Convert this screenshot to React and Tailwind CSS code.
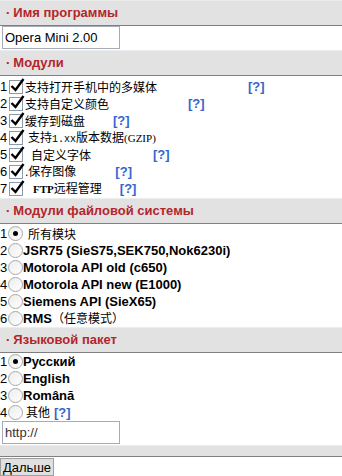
import React from 'react';

const Header = ({ title }) => (
  <div className="h-[26px] bg-[#e2e2e2] border-t border-t-[#ececec] border-b border-b-[#808080] flex items-center pl-[6px] text-[13px] font-bold text-[#b3262b]">
    <span className="mr-[3px]">·</span>
    {title}
  </div>
);

const Help = ({ className = '' }) => (
  <span className={`text-[13px] font-bold text-[#3366cc] ${className}`}>[?]</span>
);

const CheckBox = () => (
  <span className="relative inline-block w-[14px] h-[14px] border border-[#8a9aaa] bg-white mx-[1px]">
    <svg className="absolute -top-[4px] left-0" width="15" height="16" viewBox="0 0 15 16">
      <path d="M1.5 9 L5.5 13 L13.5 2" fill="none" stroke="#000" strokeWidth="2.4" />
    </svg>
  </span>
);

const Radio = ({ checked }) => (
  <span className="inline-flex items-center justify-center w-[15px] h-[15px] rounded-full border border-[#a8a8a8] bg-gradient-to-br from-[#ececec] to-white">
    {checked && <span className="w-[5px] h-[5px] rounded-full bg-black"></span>}
  </span>
);

const Row = ({ n, children }) => (
  <div className="h-[17px] flex items-center text-[13px] text-black whitespace-nowrap">
    <span className="w-[8px]">{n}</span>
    {children}
  </div>
);

const Cjk = ({ className = '', children }) => (
  <span className={`font-['Noto_Sans_CJK_SC',sans-serif] text-[12px] ${className}`}>{children}</span>
);

const modules = [
  { text: <Cjk className="ml-[1px]">支持打开手机中的多媒体</Cjk>, help: 'ml-[91px]' },
  { text: <Cjk className="ml-[1px]">支持自定义颜色</Cjk>, help: 'ml-[79px]' },
  { text: <Cjk className="ml-[1px]">缓存到磁盘</Cjk>, help: 'ml-[28px]' },
  {
    text: (
      <span className="text-[12px] ml-[4px]">
        <Cjk>支持</Cjk>
        <span className="text-[10px] font-['Liberation_Mono',monospace]">1.xx</span>
        <Cjk>版本数据</Cjk>
        <span className="text-[11px] font-['Liberation_Serif',serif]">(GZIP)</span>
      </span>
    ),
    help: null,
  },
  { text: <Cjk className="ml-[7px]">自定义字体</Cjk>, help: 'ml-[62px]' },
  {
    text: (
      <span className="text-[12px] ml-[1px]">
        <span>.</span>
        <Cjk>保存图像</Cjk>
      </span>
    ),
    help: 'ml-[39px]',
  },
  {
    text: (
      <span className="text-[12px] ml-[9px]">
        <span className="font-bold text-[11px] font-['Liberation_Serif',serif]">FTP</span>
        <Cjk>远程管理</Cjk>
      </span>
    ),
    help: 'ml-[18px]',
  },
];

const fsModules = [
  { text: <Cjk className="ml-[5px]">所有模块</Cjk>, checked: true },
  { text: <b>JSR75 (SieS75,SEK750,Nok6230i)</b> },
  { text: <b>Motorola API old (c650)</b> },
  { text: <b>Motorola API new (E1000)</b> },
  { text: <b>Siemens API (SieX65)</b> },
  {
    text: (
      <span>
        <b>RMS</b>
        <Cjk>（任意模式）</Cjk>
      </span>
    ),
  },
];

const langs = [
  { text: <b>Русский</b>, checked: true },
  { text: <b>English</b> },
  { text: <b>Română</b> },
  {
    text: (
      <span>
        <Cjk className="ml-[3px]">其他</Cjk>
        <Help className="ml-[4px]" />
      </span>
    ),
  },
];

export default function App() {
  return (
    <div className="w-[342px] h-[476px] bg-white overflow-hidden font-['Liberation_Sans','Noto_Sans_CJK_SC',sans-serif]">
      <Header title="Имя программы" />
      <div className="h-[24px] flex items-start">
        <input
          className="ml-[2px] w-[118px] h-[23px] border border-[#a5acb5] px-[2px] text-[13px] text-black outline-none"
          defaultValue="Opera Mini 2.00"
        />
      </div>

      <Header title="Модули" />
      <div className="pt-[2px] pb-[1px]">
        {modules.map((m, i) => (
          <Row key={i} n={i + 1}>
            <CheckBox />
            {m.text}
            {m.help && <Help className={m.help} />}
          </Row>
        ))}
      </div>

      <Header title="Модули файловой системы" />
      <div className="pt-[1px]">
        {fsModules.map((m, i) => (
          <Row key={i} n={i + 1}>
            <Radio checked={m.checked} />
            {m.text}
          </Row>
        ))}
      </div>

      <Header title="Языковой пакет" />
      <div>
        {langs.map((m, i) => (
          <Row key={i} n={i + 1}>
            <Radio checked={m.checked} />
            {m.text}
          </Row>
        ))}
      </div>
      <div className="h-[24px] flex items-start">
        <input
          className="ml-[2px] w-[118px] h-[23px] border border-[#a5acb5] px-[2px] text-[13px] text-[#333] outline-none"
          defaultValue="http://"
        />
      </div>
      <div className="h-[12px] bg-[#e2e2e2] border-t border-t-[#ececec] border-b border-b-[#808080]"></div>
      <div className="pt-[1px] flex">
        <button className="h-[18px] px-[2px] flex items-center bg-[#e0e0e0] border border-[#a0a0a0] text-[13px] text-black leading-none">
          Дальше
        </button>
      </div>
    </div>
  );
}
